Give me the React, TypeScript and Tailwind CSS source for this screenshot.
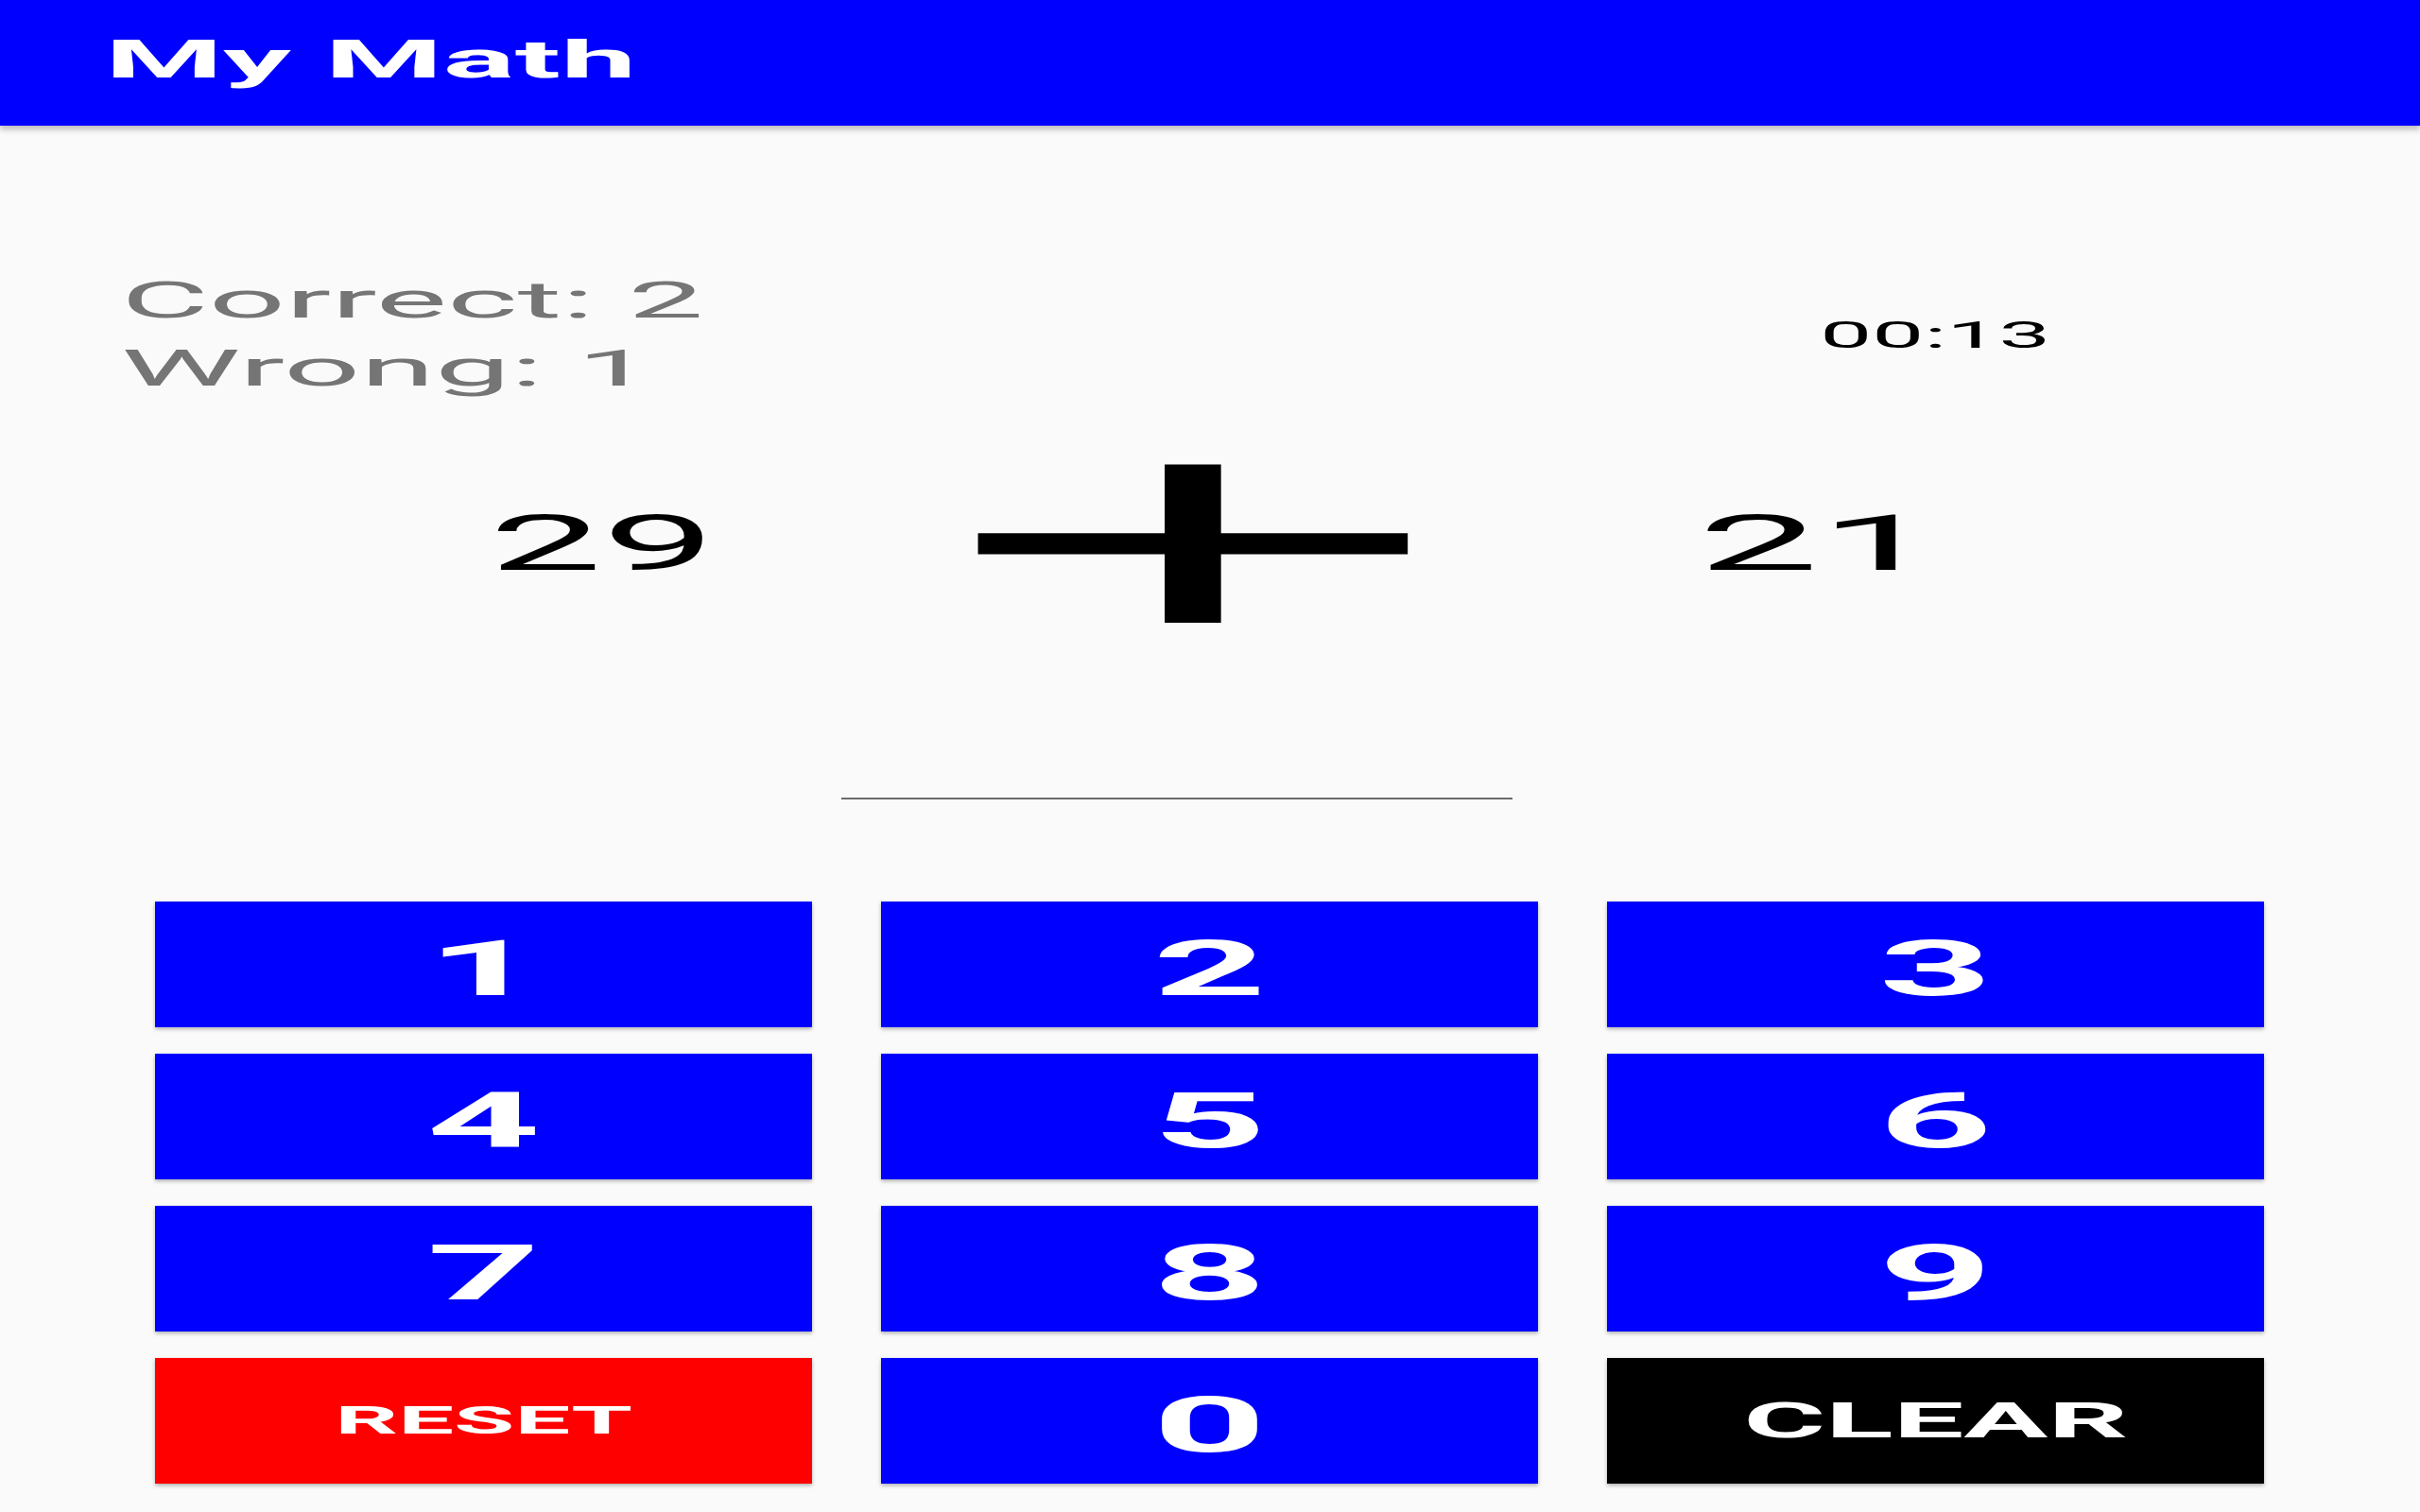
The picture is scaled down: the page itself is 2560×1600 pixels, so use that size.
import React from 'react';

const KEYS: { label: string; tone: 'blue' | 'red' | 'black' }[] = [
  { label: '1', tone: 'blue' },
  { label: '2', tone: 'blue' },
  { label: '3', tone: 'blue' },
  { label: '4', tone: 'blue' },
  { label: '5', tone: 'blue' },
  { label: '6', tone: 'blue' },
  { label: '7', tone: 'blue' },
  { label: '8', tone: 'blue' },
  { label: '9', tone: 'blue' },
  { label: 'RESET', tone: 'red' },
  { label: '0', tone: 'blue' },
  { label: 'CLEAR', tone: 'black' },
];

function KeyButton({ label, tone }: { label: string; tone: 'blue' | 'red' | 'black' }) {
  const bg = tone === 'red' ? 'bg-[#ff0000]' : tone === 'black' ? 'bg-black' : 'bg-[#0000ff]';
  const size = label === 'RESET' ? 'text-[41px]' : label === 'CLEAR' ? 'text-[52px]' : 'text-[82px] pt-[8px]';
  return (
    <button
      className={`flex h-[133px] items-center justify-center font-bold leading-none text-white shadow-[0_2px_4px_rgba(0,0,0,0.3)] ${bg} ${size}`}
    >
      <span className="inline-block origin-center scale-x-[2.55]">{label}</span>
    </button>
  );
}

export default function App() {
  return (
    <div className="flex h-[1600px] w-full flex-col overflow-hidden bg-[#fafafa] font-['Roboto',sans-serif]">
      <header className="relative z-10 h-[133px] shrink-0 bg-[#0000ff] pl-[111px] pt-[35px] shadow-[0_4px_6px_rgba(0,0,0,0.25)]">
        <h1 className="origin-left scale-x-[2.55] text-[56px] font-bold leading-none text-white">My Math</h1>
      </header>

      <div className="mt-[149px] flex items-start justify-between pl-[128px] pr-[313px]">
        <div className="origin-left scale-x-[2.69] text-[53px] leading-[72px] text-[#757575]">
          <p>Correct: 2</p>
          <p>Wrong: 1</p>
        </div>
        <div className="mt-[54px] flex w-[400px] justify-center">
          <span className="inline-block origin-center scale-x-[2.58] text-[38px] leading-none text-black">00:13</span>
        </div>
      </div>

      <div className="mt-[49px] flex h-[200px] items-center">
        <div className="ml-[387px] flex w-[500px] justify-center">
          <span className="inline-block origin-center scale-x-[2.6] text-[82px] leading-none text-black">29</span>
        </div>
        <div className="ml-[125px] flex w-[500px] justify-center">
          <span className="inline-block origin-center -translate-y-[9px] scale-x-[2.72] font-['DejaVu_Sans',sans-serif] text-[267px] leading-none text-black">
            +
          </span>
        </div>
        <div className="ml-[162px] flex w-[500px] justify-center">
          <span className="inline-block origin-center scale-x-[2.78] text-[82px] leading-none text-black">21</span>
        </div>
      </div>

      <div className="ml-[890px] mt-[169px] h-[2px] w-[710px] bg-[#6b6b6b]" />

      <div className="ml-[164px] mt-[108px] grid grid-cols-[695px_695px_695px] gap-x-[73px] gap-y-[28px]">
        {KEYS.map((k) => (
          <KeyButton key={k.label} label={k.label} tone={k.tone} />
        ))}
      </div>
    </div>
  );
}
